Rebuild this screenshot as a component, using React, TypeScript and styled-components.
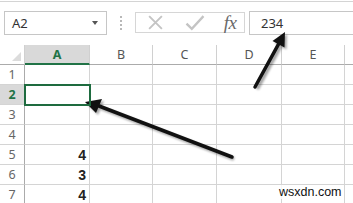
import { Fragment } from 'react';
import styled, { createGlobalStyle } from 'styled-components';

const GlobalStyle = createGlobalStyle`
  html, body {
    margin: 0;
    padding: 0;
    background: #ffffff;
  }
  body {
    font-family: 'Noto Sans', 'Open Sans', sans-serif;
  }
`;

const Page = styled.div`
  position: relative;
  width: 353px;
  height: 203px;
  overflow: hidden;
  background: #ffffff;
  border-top: 1px solid #ffffff;
`;

const TopRule = styled.div`
  height: 1px;
  background: #d4d4d4;
`;

const FormulaBar = styled.div`
  display: flex;
  align-items: stretch;
  height: 24px;
  margin-top: 9px;
  padding-left: 4px;
`;

const NameBox = styled.div`
  display: flex;
  align-items: center;
  justify-content: space-between;
  width: 103px;
  border: 1px solid #c6c6c6;
  padding: 0 8px 0 7px;
  box-sizing: border-box;
  font-size: 13px;
  color: #333;
`;

const DropArrow = styled.span`
  width: 0;
  height: 0;
  border-left: 3.5px solid transparent;
  border-right: 3.5px solid transparent;
  border-top: 4px solid #555;
`;

const Grip = styled.div`
  display: flex;
  flex-direction: column;
  justify-content: center;
  align-items: center;
  gap: 2px;
  width: 28px;
  span {
    width: 2px;
    height: 2px;
    background: #b8b8b8;
  }
`;

const ButtonBox = styled.div`
  display: flex;
  align-items: center;
  width: 110px;
  margin-top: 1px;
  margin-bottom: 2px;
  border: 1px solid #d6d6d6;
  box-sizing: border-box;
`;

const IconSlot = styled.div<{ $w: number }>`
  display: flex;
  align-items: center;
  justify-content: center;
  width: ${(p) => p.$w}px;
  height: 100%;
`;

const Fx = styled.span`
  font-family: 'Liberation Serif', 'DejaVu Serif', serif;
  font-style: italic;
  font-size: 19px;
  color: #6a6a6a;
  letter-spacing: -0.5px;
`;

const FormulaInput = styled.div`
  flex: 1;
  margin-left: 4px;
  border: 1px solid #c6c6c6;
  border-right: none;
  display: flex;
  align-items: center;
  padding-left: 11px;
  font-size: 13px;
  color: #333;
`;

const Grid = styled.div`
  display: grid;
  grid-template-columns: 25px 65px 63px 64px 65px 63px 30px;
  grid-auto-rows: 20px;
  margin-top: 10px;
`;

const ColHead = styled.div<{ $active?: boolean }>`
  display: flex;
  align-items: center;
  justify-content: center;
  font-size: 12.5px;
  color: ${(p) => (p.$active ? '#217346' : '#555')};
  font-weight: ${(p) => (p.$active ? 700 : 400)};
  background: ${(p) => (p.$active ? '#d9d9d9' : '#fff')};
  border-right: 1px solid #d0d0d0;
  border-bottom: ${(p) => (p.$active ? '2px solid #217346' : '1px solid #ababab')};
  box-sizing: border-box;
`;

const Corner = styled.div`
  position: relative;
  border-right: 1px solid #d0d0d0;
  border-bottom: 1px solid #ababab;
  box-sizing: border-box;
  &::after {
    content: '';
    position: absolute;
    right: 3px;
    bottom: 3px;
    width: 0;
    height: 0;
    border-left: 9px solid transparent;
    border-bottom: 9px solid #dcdcdc;
  }
`;

const RowHead = styled.div<{ $active?: boolean }>`
  display: flex;
  align-items: center;
  justify-content: center;
  font-size: 12.5px;
  color: ${(p) => (p.$active ? '#217346' : '#666')};
  font-weight: ${(p) => (p.$active ? 700 : 400)};
  background: ${(p) => (p.$active ? '#d9d9d9' : '#fff')};
  border-right: 1px solid #ababab;
  border-bottom: 1px solid #d4d4d4;
  box-sizing: border-box;
`;

const Cell = styled.div<{ $selected?: boolean }>`
  display: flex;
  align-items: center;
  justify-content: flex-end;
  padding-right: 3px;
  font-family: 'Liberation Sans', Arial, sans-serif;
  font-size: 14px;
  font-weight: 700;
  color: #222;
  border-right: 1px solid #d4d4d4;
  border-bottom: 1px solid #d4d4d4;
  box-sizing: border-box;
  ${(p) => p.$selected && 'outline: 2px solid #1e6b3f; outline-offset: -1px; z-index: 1;'}
`;

const Overlay = styled.svg`
  position: absolute;
  left: 0;
  top: 0;
  pointer-events: none;
`;

const Watermark = styled.div`
  position: absolute;
  left: 279px;
  top: 184px;
  font-family: 'Liberation Sans', Arial, sans-serif;
  font-size: 12.5px;
  color: #111;
  background: rgba(255, 255, 255, 0.8);
`;

const columns = ['A', 'B', 'C', 'D', 'E', ''];
const values: Record<number, string> = { 5: '4', 6: '3', 7: '4' };

const Arrow = ({ tail, base, wings, tip }: { tail: number[]; base: number[]; wings: number[][]; tip: number[] }) => (
  <>
    <g transform="translate(2 2)" opacity={0.35} filter="url(#blur)">
      <line x1={tail[0]} y1={tail[1]} x2={base[0]} y2={base[1]} stroke="#000" strokeWidth={4} />
      <polygon points={`${tip[0]},${tip[1]} ${wings[0][0]},${wings[0][1]} ${wings[1][0]},${wings[1][1]}`} fill="#000" />
    </g>
    <line x1={tail[0]} y1={tail[1]} x2={base[0]} y2={base[1]} stroke="#111" strokeWidth={3.5} strokeLinecap="round" />
    <polygon points={`${tip[0]},${tip[1]} ${wings[0][0]},${wings[0][1]} ${wings[1][0]},${wings[1][1]}`} fill="#111" />
  </>
);

const App = () => {
  return (
    <Page>
      <GlobalStyle />
      <TopRule />
      <FormulaBar>
        <NameBox>
          A2
          <DropArrow />
        </NameBox>
        <Grip>
          <span />
          <span />
          <span />
          <span />
        </Grip>
        <ButtonBox>
          <IconSlot $w={38}>
            <svg width="17" height="17" viewBox="0 0 16 16">
              <path d="M2 2 L14 14 M14 2 L2 14" stroke="#c4c4c4" strokeWidth={1.8} fill="none" />
            </svg>
          </IconSlot>
          <IconSlot $w={42}>
            <svg width="22" height="17" viewBox="0 0 20 16">
              <path d="M2 9 L7 14 L18 2" stroke="#c4c4c4" strokeWidth={2.2} fill="none" />
            </svg>
          </IconSlot>
          <IconSlot $w={28}>
            <Fx>fx</Fx>
          </IconSlot>
        </ButtonBox>
        <FormulaInput>234</FormulaInput>
      </FormulaBar>
      <Grid>
        <Corner />
        {columns.map((c, i) => (
          <ColHead key={i} $active={c === 'A'}>
            {c}
          </ColHead>
        ))}
        {[1, 2, 3, 4, 5, 6, 7].map((r) => (
          <Fragment key={r}>
            <RowHead $active={r === 2}>{r}</RowHead>
            {columns.map((c, i) => (
              <Cell key={i} $selected={r === 2 && c === 'A'}>
                {c === 'A' ? values[r] ?? '' : ''}
              </Cell>
            ))}
          </Fragment>
        ))}
      </Grid>
      <Overlay width="353" height="203" viewBox="0 0 353 203">
        <defs>
          <filter id="blur" x="-20%" y="-20%" width="140%" height="140%">
            <feGaussianBlur stdDeviation="1" />
          </filter>
        </defs>
        <Arrow tail={[232, 156]} base={[99, 105]} wings={[[102, 98], [96, 112]]} tip={[85, 101]} />
        <Arrow tail={[255, 86]} base={[278.4, 43.3]} wings={[[284.5, 46.5], [272.5, 40]]} tip={[285, 31]} />
      </Overlay>
      <Watermark>wsxdn.com</Watermark>
    </Page>
  );
};

export default App;
